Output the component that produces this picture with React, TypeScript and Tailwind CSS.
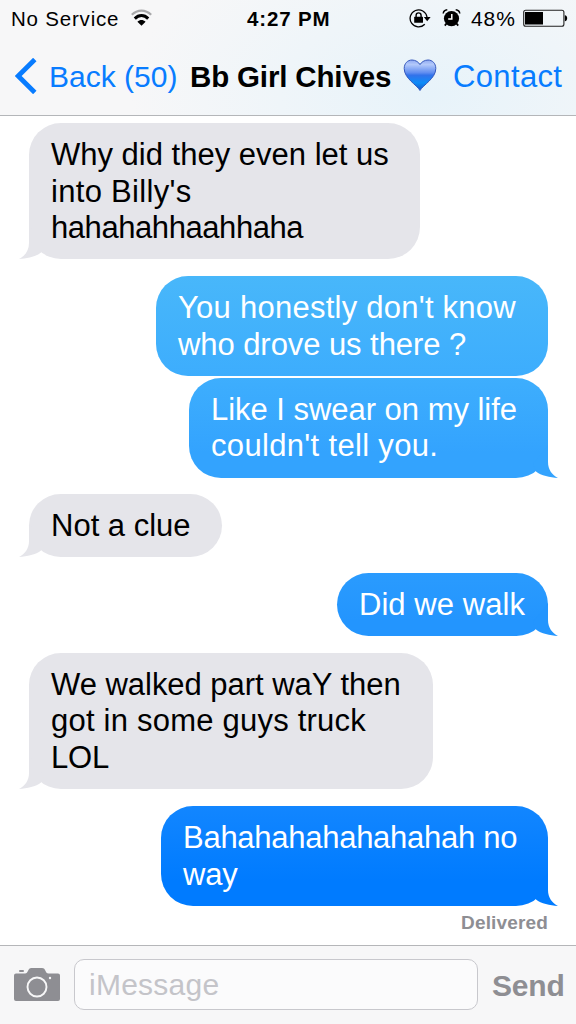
import React from 'react';
import clsx from 'clsx';

interface Line {
  text: string;
  tracking: string;
}

interface Message {
  id: number;
  from: 'me' | 'them';
  lines: Line[];
  box: string;
  tail?: string;
}

const messages: Message[] = [
  {
    id: 1,
    from: 'them',
    lines: [
      { text: 'Why did they even let us', tracking: 'tracking-[0px]' },
      { text: "into Billy's", tracking: 'tracking-[0.3px]' },
      { text: 'hahahahhaahhaha', tracking: 'tracking-[-0.43px]' },
    ],
    box: 'w-[391px] bg-[#e5e5ea]',
    tail: 'text-[#e5e5ea]',
  },
  {
    id: 2,
    from: 'me',
    lines: [
      { text: "You honestly don't know", tracking: 'tracking-[0.25px]' },
      { text: 'who drove us there ?', tracking: 'tracking-[-0.07px]' },
    ],
    box: 'mt-[17px] w-[392px] bg-linear-to-b from-[#48b7fa] to-[#3dadfd]',
  },
  {
    id: 3,
    from: 'me',
    lines: [
      { text: 'Like I swear on my life', tracking: 'tracking-[-0.03px]' },
      { text: "couldn't tell you.", tracking: 'tracking-[0.33px]' },
    ],
    box: 'mt-[2px] w-[359px] bg-linear-to-b from-[#3eaefd] to-[#33a3fe] to-75%',
    tail: 'text-[#33a3fe]',
  },
  {
    id: 4,
    from: 'them',
    lines: [{ text: 'Not a clue', tracking: 'tracking-[0px]' }],
    box: 'mt-4 w-[193px] bg-[#e5e5ea]',
    tail: 'text-[#e5e5ea]',
  },
  {
    id: 5,
    from: 'me',
    lines: [{ text: 'Did we walk', tracking: 'tracking-[0.05px]' }],
    box: 'mt-4 w-[211px] bg-linear-to-b from-[#2a9bfe] to-[#2395fe] to-75%',
    tail: 'text-[#2395fe]',
  },
  {
    id: 6,
    from: 'them',
    lines: [
      { text: 'We walked part waY then', tracking: 'tracking-[-0.03px]' },
      { text: 'got in some guys truck', tracking: 'tracking-[0.22px]' },
      { text: 'LOL', tracking: 'tracking-[-0.15px]' },
    ],
    box: 'mt-[17px] w-[404px] bg-[#e5e5ea]',
    tail: 'text-[#e5e5ea]',
  },
  {
    id: 7,
    from: 'me',
    lines: [
      { text: 'Bahahahahahahahah no', tracking: 'tracking-[-0.27px]' },
      { text: 'way', tracking: 'tracking-[-0.15px]' },
    ],
    box: 'mt-[17px] w-[387px] bg-linear-to-b from-[#1286ff] to-[#007bff] to-75%',
    tail: 'text-[#007bff]',
  },
];

const Bubble: React.FC<{ message: Message }> = ({ message }) => {
  const mine = message.from === 'me';

  return (
    <div
      className={clsx(
        'relative shrink-0 rounded-[32px] pt-[14px] pb-[12.7px] pl-[22px] text-[31px] leading-[36.5px] whitespace-nowrap',
        mine ? 'self-end text-white' : 'self-start text-black',
        message.box
      )}
    >
      {message.tail && (
        <svg
          viewBox="0 0 34 34"
          className={clsx(
            'absolute bottom-0 h-[34px] w-[34px]',
            mine ? '-right-[10px]' : '-left-[10px] -scale-x-100',
            message.tail
          )}
          fill="currentColor"
        >
          <path d="M24 1V18C24 25.5 28 31 34 34C26 33.5 17 31.7 12 27.6L9 20Z" />
        </svg>
      )}
      {message.lines.map((line) => (
        <div key={line.text} className={clsx('relative', line.tracking)}>
          {line.text}
        </div>
      ))}
    </div>
  );
};

const StatusBar: React.FC = () => (
  <div className="flex h-10 items-start pt-[7px] pl-[11px] text-[20px] leading-6 text-black">
    <span className="w-[120px] text-[20.5px] tracking-[0.8px] whitespace-nowrap">No Service</span>
    <svg viewBox="0 0 22 18" className="mt-[2px] h-[18px] w-[22px]" fill="none">
      <path d="M0.8 5.8C6.5 0.2 14.5 0.2 20.2 5.8" stroke="#a9a9ab" strokeWidth="2.2" />
      <path d="M3.8 9.6C7.8 5.6 13.2 5.6 17.2 9.6" stroke="#000" strokeWidth="3" />
      <path d="M6.4 12.8C9 10.4 12 10.4 14.6 12.8L10.5 16.8Z" fill="#000" />
    </svg>
    <span className="ml-[94px] w-[162px] text-[20.5px] font-bold tracking-[0.85px] whitespace-nowrap">4:27 PM</span>
    {/* Rotation lock */}
    <svg viewBox="0 0 22 20" className="mt-px h-5 w-[22px]" fill="none">
      <path d="M15.8 16.2A8.5 8.5 0 1 1 18 9" stroke="#000" strokeWidth="1.3" />
      <path d="M14.8 9H21.6L18.2 13.2Z" fill="#000" />
      <rect x="5.2" y="8.7" width="8.8" height="6" rx="0.5" fill="#000" />
      <path d="M7.1 9V7.4a2.5 2.5 0 0 1 5 0V9" stroke="#000" strokeWidth="1.4" />
    </svg>
    {/* Alarm */}
    <svg viewBox="0 0 20 20" className="mt-px ml-[11px] h-5 w-5" fill="none">
      <circle cx="9.5" cy="10.6" r="7.6" fill="#000" />
      <path d="M1.2 5.5C1.5 3.5 3.2 2 5.3 1.8M17.8 5.5C17.5 3.5 15.8 2 13.7 1.8" stroke="#000" strokeWidth="1.5" />
      <path d="M4.5 15.5L2.8 17.6M14.5 15.5L16.2 17.6" stroke="#000" strokeWidth="1.8" />
      <path d="M9.8 6V11H6.2" stroke="#fff" strokeWidth="1.5" />
    </svg>
    <span className="ml-[9px] w-[52px] text-[21px] tracking-[0.9px] whitespace-nowrap">48%</span>
    <svg viewBox="0 0 45 18" className="mt-[2px] h-[18px] w-[45px]" fill="none">
      <rect x="0.7" y="1.2" width="40.2" height="16" rx="2" stroke="#222" strokeWidth="1.1" />
      <rect x="2" y="3" width="18" height="12.5" fill="#000" />
      <path d="M41.8 6.2C45 6.2 45 12.2 41.8 12.2Z" fill="#000" />
    </svg>
  </div>
);

const NavBar: React.FC = () => (
  <div className="flex h-[75px] items-start pt-[19px] pl-[15px] text-[30px] leading-9 whitespace-nowrap text-[#087cff]">
    <svg viewBox="0 0 22 36" className="-mt-px h-9 w-[22px]" fill="none">
      <path d="M19.8 1.5L3.2 18L19.8 34.5" stroke="currentColor" strokeWidth="4.8" />
    </svg>
    <span className="ml-3 w-[141px]">Back (50)</span>
    <h1 className="w-[213px] text-[29.5px] font-bold tracking-[-0.15px] text-black">Bb Girl Chives</h1>
    <svg viewBox="0 0 34 34" className="h-[34px] w-[34px]" fill="none">
      <defs>
        <linearGradient id="heart" x1="0" y1="0" x2="0" y2="1">
          <stop offset="0" stopColor="#8fa9f2" />
          <stop offset="0.15" stopColor="#b3c9fa" />
          <stop offset="0.42" stopColor="#5f8cf0" />
          <stop offset="0.5" stopColor="#3272ea" />
          <stop offset="0.75" stopColor="#0d8cf8" />
          <stop offset="1" stopColor="#1557c8" />
        </linearGradient>
      </defs>
      <path
        d="M17 31.5C14 26 1.2 19.5 1.2 9.5C1.2 4.5 4.5 1 9 1C12.8 1 15.7 3.3 17 5.6C18.3 3.3 21.2 1 25 1C29.5 1 32.8 4.5 32.8 9.5C32.8 19.5 20 26 17 31.5Z"
        fill="url(#heart)"
        stroke="#3558bd"
        strokeWidth="1"
      />
    </svg>
    <span className="ml-4 text-[31px] tracking-[0.35px]">Contact</span>
  </div>
);

const Composer: React.FC = () => (
  <div className="flex h-[79px] shrink-0 items-start border-t border-[#b5b6b9] bg-[#f7f7f8] pt-[13px] pl-[14px]">
    <svg viewBox="0 0 46 36" className="mt-[8px] h-9 w-[46px]" fill="none">
      <path
        d="M2 6.5H11C14.5 6.5 13.5 1 17.5 1H28C32 1 31 6.5 34.5 6.5H44Q46 6.5 46 8.5V32Q46 34 44 34H2Q0 34 0 32V8.5Q0 6.5 2 6.5Z"
        fill="#8e8e93"
      />
      <rect x="5" y="3" width="5" height="2" rx="1" fill="#8e8e93" />
      <circle cx="23" cy="20" r="9.5" stroke="#f7f7f8" strokeWidth="1.9" />
      <circle cx="36" cy="11" r="1.2" fill="#f7f7f8" />
    </svg>
    <div className="ml-[14px] h-[51px] w-[404px] rounded-[10px] border border-[#c8c8cd] bg-[#fbfbfc] pt-[7px] pl-[14px] text-[30px] leading-9 tracking-[0.25px] text-[#c4c4c9]">
      iMessage
    </div>
    <span className="ml-[14px] pt-[9px] text-[30px] leading-9 font-bold tracking-[-0.2px] text-[#8e8e93]">Send</span>
  </div>
);

const App: React.FC = () => {
  return (
    <div className="flex h-[1024px] w-[576px] flex-col overflow-hidden bg-white font-['Liberation_Sans',Arial,sans-serif]">
      <header className="h-[116px] shrink-0 border-b border-[#b4b6b9] bg-[#f7f7f8] bg-[radial-gradient(ellipse_300px_170px_at_430px_95px,#e7f3fa,#f7f7f8)]">
        <StatusBar />
        <NavBar />
      </header>

      <main className="flex min-h-0 flex-1 flex-col pt-[7px] pr-7 pl-[29px]">
        {messages.map((message) => (
          <Bubble key={message.id} message={message} />
        ))}
        <p className="mt-[5px] self-end text-[19px] leading-6 font-bold tracking-[0.15px] text-[#8e8e93]">Delivered</p>
      </main>

      <Composer />
    </div>
  );
};

export default App;
